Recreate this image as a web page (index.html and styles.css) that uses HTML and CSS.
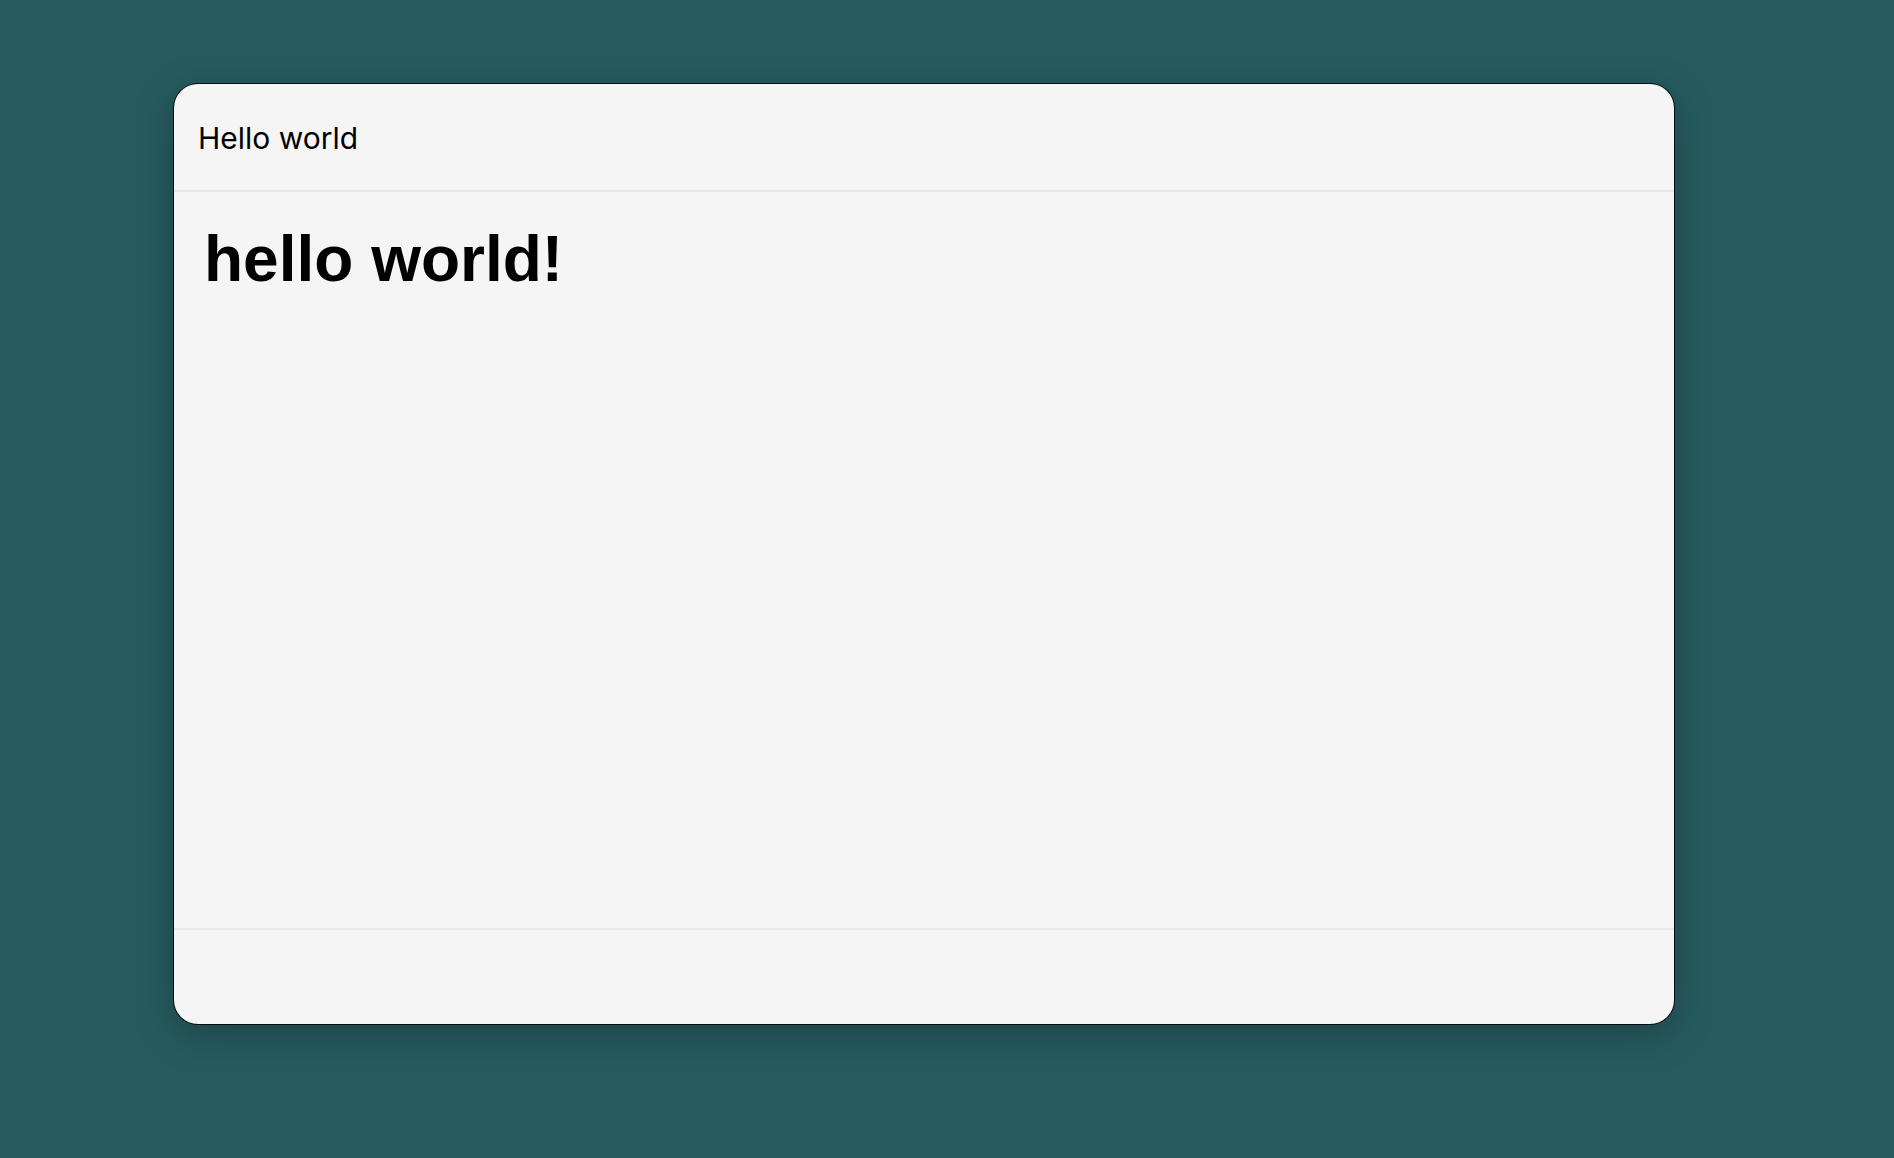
FILE: index.html
```html
<!DOCTYPE html>
<html lang="en">
<head>
<meta charset="utf-8">
<title>Hello world</title>
<link rel="stylesheet" href="styles.css">
</head>
<body class="desktop">
<main class="window">
<header class="window-header">Hello world</header>
<section class="window-body">
<h1 class="heading">hello world!</h1>
</section>
<footer class="window-footer"></footer>
</main>
</body>
</html>
```

FILE: styles.css
```css
* {
  box-sizing: border-box;
}

.desktop {
  display: flex;
  min-height: 100vh;
  margin: 0;
  padding: 84px 220px 134px 174px;
  background: #255b60;
  color: #000;
}

.window {
  flex: 1;
  display: flex;
  flex-direction: column;
  border-radius: 24px;
  background: #f5f5f5;
  box-shadow: 0 0 0 1px #020f12, 0 10px 36px rgba(24, 24, 24, 0.36);
}

.window-header {
  padding: 36px 24px 34px;
  border-bottom: 2px solid #e5e5ea;
  font: 30px/36px Inter, "Liberation Sans", sans-serif;
}

.window-body {
  flex: 1;
  padding: 30px;
}

.heading {
  margin: 0;
  font: bold 64px/74px "Liberation Sans", Arial, sans-serif;
}

.window-footer {
  min-height: 96px;
  border-top: 2px solid #e9e9e9;
}
```
